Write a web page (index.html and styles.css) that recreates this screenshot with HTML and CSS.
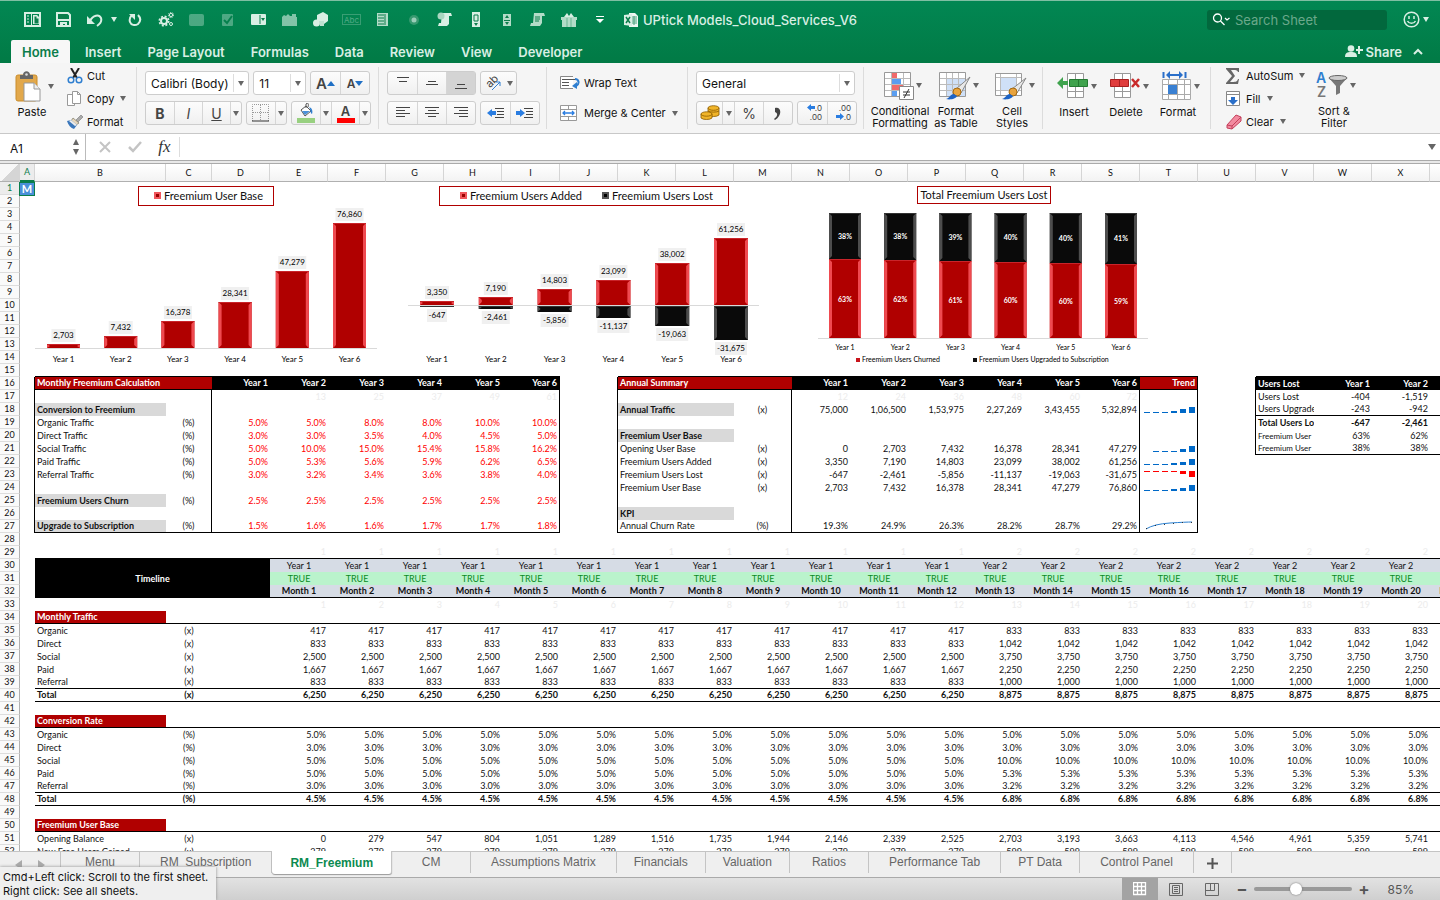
FILE: index.html
```
<!DOCTYPE html>
<html lang="en">

<head>
    <meta charset="UTF-8">
    <meta name="viewport" content="width=device-width, initial-scale=1.0">
    <title>UPtick Models_Cloud_Services_V6</title>
    <link rel="stylesheet" href="styles.css">
</head>

<body>
    <header class="top">
        <div class="titlebar">
            <nav class="quick">
                <button aria-label="Sidebar"><svg width="17" height="15" viewBox="0 0 17 15"><path d="M1 1h15v13H1z" fill="none" stroke="#d9efe4" stroke-width="2"/><path d="M3 4h2M3 7h2M3 10h2" stroke="#d9efe4"/><path d="M7 2h1v11H7zM9 3h4l2 2v7H9z" fill="#d9efe4"/><path d="M10.500 4.500h2v2h2v5h-4z" fill="#0b7d4b"/></svg></button>
                <button aria-label="Save"><svg width="15" height="15" viewBox="0 0 15 15"><path d="M1 1h11l2 2v11H1z" fill="none" stroke="#d9efe4" stroke-width="2"/><path d="M3 2h8v5H3z" fill="#0b7d4b"/><path d="M2 7h11v2H2zM4 10h7v4H9v-2H7v2H4z" fill="#d9efe4"/></svg></button>
                <button aria-label="Undo"><svg width="17" height="14" viewBox="0 0 17 14"><path d="M1 3v8h8z" fill="#d9efe4"/><path d="M4 8c3-6 9-7 11-3 1 3-1 6-4 8" fill="none" stroke="#d9efe4" stroke-width="2"/></svg></button>
                <i class="arrow light"></i>
                <button aria-label="Redo"><svg width="15" height="15" viewBox="0 0 15 15"><path d="M11 3c3 3 3 6 0 9-3 2-7 1-8-2-1-3 0-5 2-7" fill="none" stroke="#d9efe4" stroke-width="2"/><path d="M2 2h6v6z" fill="#d9efe4"/></svg></button>
                <button aria-label="Macros"><svg width="16" height="15" viewBox="0 0 16 15" fill="none" stroke="#d9efe4"><circle cx="6" cy="9" r="3" stroke-width="2"/><circle cx="6" cy="9" r="4.700" stroke-width="1.600" stroke-dasharray="2 1.700"/><circle cx="13" cy="3" r="1.600"/><circle cx="13" cy="3" r="2.600" stroke-dasharray="1.200 1"/><circle cx="13" cy="12" r="1.500"/></svg></button>
                <button class="dim" aria-label="Button control"><svg width="15" height="12" viewBox="0 0 15 12"><rect width="15" height="12" rx="2" fill="#d9efe4"/></svg></button>
                <button class="dim" aria-label="Check box"><svg width="12" height="12" viewBox="0 0 12 12"><rect width="11" height="12" rx="1" fill="#d9efe4"/><path d="M2 6l3 3 5-7" fill="none" stroke="#0b7d4b" stroke-width="2"/></svg></button>
                <button aria-label="Combo box"><svg width="15" height="11" viewBox="0 0 15 11"><rect width="15" height="11" rx="1" fill="#d9efe4"/><path d="M9 1v9" stroke="#0b7d4b"/><path d="M10 4h4l-2 3z" fill="#0b7d4b"/></svg></button>
                <button class="half" aria-label="Group box"><svg width="15" height="12" viewBox="0 0 15 12"><path d="M0 3l2-2 2 1 2-2 2 2h2V0h4v3h1v9H0z" fill="#d9efe4"/></svg></button>
                <button aria-label="Shapes"><svg width="15" height="15" viewBox="0 0 15 15"><path d="M4 3l6-3 5 3v6l-4 3-7-3z" fill="#d9efe4"/><circle cx="3.500" cy="11" r="3.500" fill="#d9efe4"/><path d="M6 9h5v5H7z" fill="#bfe2d1"/></svg></button>
                <button class="dim abc" aria-label="Label">Abc</button>
                <button aria-label="List box"><svg width="11" height="13" viewBox="0 0 11 13"><path d="M0 0h11v13H0z" fill="#b3dcc8"/><path d="M1 2h6M1 5h6M1 8h6M1 11h6M8 1v11" stroke="#0b7d4b"/></svg></button>
                <button class="half" aria-label="Option button"><svg width="12" height="12" viewBox="0 0 12 12"><circle cx="6" cy="6" r="5" fill="#5aa885"/><circle cx="6" cy="6" r="2.500" fill="#fff"/></svg></button>
                <button aria-label="Record macro"><svg width="15" height="15" viewBox="0 0 15 15"><path d="M5 1h9l1 3h-3v8l-2 2H1l1-3h2z" fill="#d9efe4"/><circle cx="4" cy="4" r="3.500" fill="#a9d6c0"/></svg></button>
                <button aria-label="Scroll bar"><svg width="8" height="15" viewBox="0 0 8 15"><path d="M0 0h8v15H0z" fill="#d9efe4"/><path d="M2 3h4v6H2z" fill="none" stroke="#0b7d4b"/><path d="M2 11h4l-2 3z" fill="#0b7d4b"/></svg></button>
                <button aria-label="Spin button"><svg width="8" height="12" viewBox="0 0 8 12"><path d="M0 0h8v12H0z" fill="#b3dcc8"/><path d="M2 4l2-3 2 3zM2 8l2 3 2-3zM1 6h6v1H1z" fill="#0b7d4b"/></svg></button>
                <button aria-label="Relative references"><svg width="15" height="13" viewBox="0 0 15 13"><path d="M4 0h10l1 3h-3v7l-2 3H0l1-3h2z" fill="#b3dcc8"/><path d="M5 4h5M5 6h5M5 8h4" stroke="#0b7d4b"/></svg></button>
                <button aria-label="Add-ins"><svg width="16" height="14" viewBox="0 0 16 14"><path d="M0 4h16v3h-1v7H1V7H0z" fill="#b3dcc8"/><path d="M3 4l3-4 2 3 2-3 3 4z" fill="#d9efe4"/><path d="M6 5v9M10 5v9" stroke="#6bb592"/></svg></button>
                <button aria-label="Customize toolbar"><svg width="8" height="8" viewBox="0 0 8 8"><path d="M0 0h8v1H0zM0 3h8L4 7z" fill="#fff"/></svg></button>
            </nav>
            <div class="doc">
                <svg width="14" height="14" viewBox="0 0 14 14"><path d="M5 0h6l3 3v11H5z" fill="#eef7f2"/><path d="M8 4h5M8 6h5M8 8h5M8 10h5M10 3v9" stroke="#4da27e"/><path d="M0 2l8-1v12l-8-1z" fill="#d9efe4"/><path d="M2 4l4 6M6 4l-4 6" stroke="#0b7d4b" stroke-width="1.500"/></svg>
                <span>UPtick Models_Cloud_Services_V6</span>
            </div>
            <label class="search">
                <svg width="19" height="13" viewBox="0 0 19 13" fill="none" stroke="#fff" stroke-width="1.300"><circle cx="5.500" cy="5" r="4"/><path d="M8.500 8l4 4M13 5l2 2 2.500-2"/></svg>
                <input type="text" placeholder="Search Sheet" aria-label="Search Sheet">
            </label>
            <button class="smile" aria-label="Feedback"><svg width="17" height="17" viewBox="0 0 17 17" fill="none" stroke="#d9efe4" stroke-width="1.500"><circle cx="8.500" cy="8.500" r="7.300"/><path d="M6 5v3M11 5v3M4.500 10c1.500 3 6.500 3 8 0"/></svg><i class="arrow light"></i></button>
        </div>
        <nav class="menu">
            <button class="current">Home</button>
            <button>Insert</button>
            <button>Page Layout</button>
            <button>Formulas</button>
            <button>Data</button>
            <button>Review</button>
            <button>View</button>
            <button>Developer</button>
            <button class="share"><svg width="18" height="13" viewBox="0 0 18 13" fill="#d9efe4"><circle cx="6" cy="3.500" r="3.300"/><path d="M0 12c0-4 2-5 6-5s6 1 6 5zM13 1h2v3h3v2h-3v3h-2V6h-2V4h2z"/></svg>Share</button>
            <button class="fold" aria-label="Collapse ribbon"><svg width="10" height="7" viewBox="0 0 10 7"><path d="M1 6l4-4 4 4" fill="none" stroke="#d9efe4" stroke-width="2"/></svg></button>
        </nav>
    </header>

    <section class="ribbon">
        <div class="group clipboard">
            <button class="big">
                <span class="pic"><svg width="26" height="31" viewBox="0 0 26 31"><rect x="1" y="4" width="21" height="26" rx="2" fill="#e2a84b" stroke="#c98c2c"/><path d="M5 8V4h3c0-5 7-5 7 0h3v4z" fill="#666"/><circle cx="11.500" cy="3.500" r="1.300" fill="#ddd"/><path d="M9 12h10l6 6v12H9z" fill="#fff" stroke="#999"/><path d="M19 12v6h6" fill="#eee" stroke="#999"/></svg><i class="arrow"></i></span>
                Paste
            </button>
            <div class="stack">
                <button><span class="ic"><svg width="16" height="16" viewBox="0 0 16 16"><path d="M4 0l6 10M12 0L6 10" stroke="#222" stroke-width="2"/><g fill="none" stroke="#2f7fd0" stroke-width="1.500"><circle cx="4" cy="12" r="2.800"/><circle cx="12" cy="12" r="2.800"/></g></svg></span>Cut</button>
                <button><span class="ic"><svg width="15" height="16" viewBox="0 0 15 16" fill="#fff" stroke="#999"><path d="M.5 3.500h7v11h-7z"/><path d="M5.500.5h5l3 3v9h-8z"/><path d="M10.500.5v3h3" fill="none"/></svg></span>Copy<i class="arrow"></i></button>
                <button><span class="ic"><svg width="16" height="14" viewBox="0 0 16 14"><path d="M9 5l5-5 2 2-5 5z" fill="#aaa" stroke="#777" stroke-width=".6"/><path d="M6 3l6 5-3 2-5-4z" fill="#e8d7bb" stroke="#776" stroke-width=".7"/><path d="M0 6l4-1 6 5-3 4c-3-1-6-4-7-8z" fill="#3b77bb"/><path d="M4 5l6 5-2 1-6-5z" fill="#eee"/></svg></span>Format</button>
            </div>
        </div>

        <div class="group rows font">
            <div class="line">
                <label class="pick name"><select aria-label="Font"><option>Calibri (Body)</option></select><i class="arrow"></i></label>
                <label class="pick size"><select aria-label="Font size"><option>11</option></select><i class="arrow"></i></label>
                <div class="set"><button class="wide" aria-label="Increase font size"><b class="a1">A</b><svg width="8" height="5" viewBox="0 0 8 5"><path d="M0 5l4-5 4 5z" fill="#1f6fc4"/></svg></button><button class="wide" aria-label="Decrease font size"><b class="a2">A</b><svg width="8" height="5" viewBox="0 0 8 5"><path d="M0 0l4 5 4-5z" fill="#1f6fc4"/></svg></button></div>
            </div>
            <div class="line">
                <div class="set"><button><b>B</b></button><button><em>I</em></button><button><u>U</u></button><button class="drop" aria-label="Underline options"><i class="arrow"></i></button></div>
                <div class="set"><button aria-label="Borders"><svg width="18" height="18" viewBox="0 0 18 18" fill="none"><path d="M.5 17V.5h16V17M8.500 1v16M1 8.500h16" stroke="#999" stroke-dasharray="1 1"/><path d="M0 17h17" stroke="#333"/></svg></button><button class="drop" aria-label="Border options"><i class="arrow"></i></button></div>
                <div class="set"><button aria-label="Fill color"><svg width="18" height="20" viewBox="0 0 18 20"><path d="M0 15h18v5H0z" fill="#98d080"/><path d="M4 7l5-4 5 5-6 5z" fill="#fff" stroke="#555"/><path d="M5 8l8 0-5 4z" fill="#4a90d9"/><path d="M9 5V1c2-2 3 0 2 3" fill="none" stroke="#555"/><path d="M12 4c3 1 4 4 3 7-2-1-1-4-3-7z" fill="#2f7fd0"/></svg></button><button class="drop" aria-label="Fill options"><i class="arrow"></i></button><button class="ink">A</button><button class="drop" aria-label="Font color options"><i class="arrow"></i></button></div>
            </div>
        </div>

        <div class="group rows align">
            <div class="line">
                <div class="set"><button aria-label="Top align"><svg width="14" height="16" viewBox="0 0 14 16"><path d="M1 2.500h12M3 6.500h8" stroke="#444"/></svg></button><button aria-label="Middle align"><svg width="14" height="16" viewBox="0 0 14 16"><path d="M3 6.500h8M1 9.500h12" stroke="#444"/></svg></button><button class="on" aria-label="Bottom align"><svg width="14" height="16" viewBox="0 0 14 16"><path d="M3 9.500h8M1 13.500h12" stroke="#444"/></svg></button></div>
                <div class="set"><button class="rot" aria-label="Orientation"><svg width="18" height="18" viewBox="0 0 18 18"><text x="2" y="13" transform="rotate(-45 5 10)" class="ab">ab</text><path d="M7 16L15 8M15 8h-4M15 8v4" stroke="#2f7fd0" fill="none"/></svg><i class="arrow"></i></button></div>
            </div>
            <div class="line">
                <div class="set"><button aria-label="Align left"><svg width="16" height="14" viewBox="0 0 16 14"><path d="M1 1.500h14M1 4.500h9M1 7.500h14M1 10.500h9" stroke="#444"/></svg></button><button aria-label="Align center"><svg width="16" height="14" viewBox="0 0 16 14"><path d="M1 1.500h14M4 4.500h8M1 7.500h14M4 10.500h8" stroke="#444"/></svg></button><button aria-label="Align right"><svg width="16" height="14" viewBox="0 0 16 14"><path d="M1 1.500h14M6 4.500h9M1 7.500h14M6 10.500h9" stroke="#444"/></svg></button></div>
                <div class="set"><button aria-label="Decrease indent"><svg width="18" height="12" viewBox="0 0 18 12"><path d="M8 1.500h9M10 4.500h7M10 7.500h7M8 10.500h9" stroke="#444"/><path d="M0 6l5-4v2h4v4H5v2z" fill="#2a7de1"/></svg></button><button aria-label="Increase indent"><svg width="18" height="12" viewBox="0 0 18 12"><path d="M8 1.500h9M10 4.500h7M10 7.500h7M8 10.500h9" stroke="#444"/><path d="M9 6L4 2v2H0v4h4v2z" fill="#2a7de1"/></svg></button></div>
            </div>
        </div>

        <div class="group rows wrap">
            <button class="plain"><span class="ic"><svg width="20" height="14" viewBox="0 0 20 14"><path d="M13 12.500H.5V.5H13" fill="#fff" stroke="#888"/><path d="M2 3.500h13M2 6.500h7M2 9.500h7" stroke="#555"/><path d="M15 3c4 0 5 5 1 7" fill="none" stroke="#2f7fd0" stroke-width="2"/><path d="M17 6v7l-5-3z" fill="#2f7fd0"/></svg></span>Wrap Text</button>
            <button class="plain"><span class="ic"><svg width="18" height="17" viewBox="0 0 18 17"><path d="M.5.5h16v15H.5z" fill="#fff" stroke="#999"/><path d="M.5 4.500h16M.5 11.500h16M8.500 1v3M8.500 12v3" stroke="#999"/><path d="M3 8h11M5 6L3 8l2 2M12 6l2 2-2 2" fill="none" stroke="#2a7de1" stroke-width="1.300"/></svg></span>Merge &amp; Center<i class="arrow"></i></button>
        </div>

        <div class="group rows number">
            <label class="pick format"><select aria-label="Number format"><option>General</option></select><i class="arrow"></i></label>
            <div class="line">
                <div class="set"><button class="coin" aria-label="Currency"><svg width="20" height="16" viewBox="0 0 20 16" fill="#f0b429" stroke="#8a5a00" stroke-width=".8"><path d="M8 3v7c2 2 9 2 11 0V3z"/><ellipse cx="13.500" cy="3" rx="5.500" ry="2.300"/><path d="M8 6c2 1.500 9 1.500 11 0M1 9v4c2 2 9 2 11 0V9z"/><ellipse cx="6.500" cy="9" rx="5.500" ry="2.200"/></svg></button><button class="drop" aria-label="Currency options"><i class="arrow"></i></button><button class="pct">%</button><button aria-label="Comma style"><svg width="8" height="13" viewBox="0 0 8 13"><path d="M1 1c6-2 8 7 0 12l-1-1c4-3 4-6 1-7z" fill="#444"/></svg></button></div>
                <div class="set dec"><button aria-label="Increase decimal"><span><svg width="8" height="7" viewBox="0 0 8 7"><path d="M0 3.500L4 0v2h4v3H4v2z" fill="#2a7de1"/></svg>.0</span><span>.00</span></button><button aria-label="Decrease decimal"><span>.00</span><span><svg width="8" height="7" viewBox="0 0 8 7"><path d="M8 3.500L4 0v2H0v3h4v2z" fill="#2a7de1"/></svg>.0</span></button></div>
            </div>
        </div>

        <div class="group styles">
            <button class="big"><span class="pic"><svg width="30" height="28" viewBox="0 0 30 28"><path d="M.5.5h26v24H.5z" fill="#fff" stroke="#999"/><path d="M7 1h6v5H7zM7 12h12v6H7z" fill="#f06a6a"/><path d="M7 6h10v6H7zM7 18h6v6H7z" fill="#5a9df0"/><path d="M1 6.500h25M1 12.500h25M1 18.500h25M7.500 1v23M19.500 1v23" stroke="#bbb"/><path d="M15.500 14.500h14v13h-14z" fill="#fff" stroke="#888"/><path d="M19 20h7M19 23h7M25 17l-5 9" stroke="#333"/></svg><i class="arrow"></i></span>Conditional<br>Formatting</button>
            <button class="big"><span class="pic"><svg width="32" height="28" viewBox="0 0 32 28"><path d="M.5.5h26v24H.5z" fill="#fff" stroke="#999"/><path d="M7 7h19v17H7z" fill="#cfe0f7"/><path d="M1 6.500h25M1 12.500h25M1 18.500h25M7.500 1v23M13.500 1v23M19.500 1v23" stroke="#bbb"/><path d="M17 17L31 5l-9 16z" fill="#e8e8e8" stroke="#888"/><circle cx="18" cy="20" r="4" fill="#e8a33d" stroke="#a66a10"/><path d="M7 27c4-1 4-5 8-5l3 2c-1 3-7 4-11 3z" fill="#1d63c4"/></svg><i class="arrow"></i></span>Format<br>as Table</button>
            <button class="big"><span class="pic"><svg width="32" height="28" viewBox="0 0 32 28"><path d="M.5 1.500h26v22H.5z" fill="#fff" stroke="#999"/><path d="M1 5.500h25M1 18.500h25M5.500 2v21M21.500 2v21" stroke="#bbb"/><path d="M6 6h15v12H6z" fill="#cfe0f7"/><path d="M17 17L31 6l-9 15z" fill="#e8e8e8" stroke="#888"/><circle cx="18" cy="20" r="4" fill="#e8a33d" stroke="#a66a10"/><path d="M7 27c4-1 4-5 8-5l3 2c-1 3-7 4-11 3z" fill="#1d63c4"/></svg><i class="arrow"></i></span>Cell<br>Styles</button>
        </div>

        <div class="group cells">
            <button class="big"><span class="pic"><svg width="32" height="28" viewBox="0 0 32 28"><path d="M10.500 1.500h16v24h-16zM18.500 2v24M11 19.500h15" fill="#fff" stroke="#999"/><path d="M12.500 7.500h18v7h-18z" fill="#3fa34d" stroke="#257a33"/><path d="M21.500 8v7" stroke="#257a33"/><path d="M0 11l6-6v4h5v4H6v4z" fill="#3fa34d"/></svg><i class="arrow"></i></span>Insert</button>
            <button class="big"><span class="pic"><svg width="32" height="28" viewBox="0 0 32 28"><path d="M5.500 1.500h16v24h-16zM13.500 2v24M6 19.500h15" fill="#fff" stroke="#999"/><path d="M1.500 7.500h18v7h-18z" fill="#e03c3c" stroke="#a82020"/><path d="M10.500 8v7" stroke="#a82020"/><path d="M23 7l7 8M30 7l-7 8" stroke="#c92a2a" stroke-width="2.500"/></svg><i class="arrow"></i></span>Delete</button>
            <button class="big"><span class="pic"><svg width="30" height="30" viewBox="0 0 30 30"><path d="M.5 8.500h28v20H.5zM6.500 9v19M15.500 9v19M22.500 9v19M1 13.500h27M1 23.500h27" fill="#fff" stroke="#aaa"/><path d="M6 14h9v9H6z" fill="#3a80d2"/><path d="M1.500 1v6M23.500 1v6M5 4h15" stroke="#2a6fc9" stroke-width="2"/><path d="M8 0v8L4 4zM17 0v8l4-4z" fill="#2a6fc9"/></svg><i class="arrow"></i></span>Format</button>
        </div>

        <div class="group edit">
            <div class="stack">
                <button><span class="ic"><svg width="14" height="16" viewBox="0 0 14 16"><path d="M0 0h13v4h-1c-1-2-2-2-7-2l4 6-5 6c6 0 7 0 8-3h1l-1 5H0v-1l6-7-6-7z" fill="#666"/></svg></span>AutoSum<i class="arrow"></i></button>
                <button><span class="ic"><svg width="14" height="15" viewBox="0 0 14 15"><path d="M.5.5h13v14H.5zM.5 3.500h13" fill="#fff" stroke="#888"/><path d="M5 6h4v3h3l-5 5-5-5h3z" fill="#2a6fc9"/></svg></span>Fill<i class="arrow"></i></button>
                <button><span class="ic"><svg width="16" height="16" viewBox="0 0 16 16"><path d="M1 11L10 1l5 2v4l-9 8-5-1z" fill="#f28ba0" stroke="#c4405c"/><path d="M1 11l5 1 9-9M6 12v3" fill="none" stroke="#c4405c"/></svg></span>Clear<i class="arrow"></i></button>
            </div>
            <button class="big"><span class="pic"><svg width="32" height="27" viewBox="0 0 32 27"><g class="az"><text x="0" y="11" fill="#2f7fd0">A</text><text x="1" y="25" fill="#777">Z</text></g><path d="M13 6l7 8v9l4-2v-7l7-8z" fill="#777"/><ellipse cx="22" cy="6" rx="9" ry="2.500" fill="#ccc" stroke="#666"/></svg><i class="arrow"></i></span>Sort &amp;<br>Filter</button>
        </div>
    </section>

    <section class="formula">
        <input class="ref" type="text" value="A1" aria-label="Name box">
        <span class="step"><i class="up"></i><i class="down"></i></span>
        <button aria-label="Cancel"><svg width="12" height="12" viewBox="0 0 12 12"><path d="M1 1l10 10M11 1L1 11" stroke="#c4c4c4" stroke-width="2"/></svg></button>
        <button aria-label="Enter"><svg width="14" height="12" viewBox="0 0 14 12"><path d="M1 6l4 4 8-9" fill="none" stroke="#c4c4c4" stroke-width="2.500"/></svg></button>
        <button class="fx">fx</button>
        <input class="entry" type="text" aria-label="Formula">
        <i class="arrow large"></i>
    </section>

    <main class="sheet">
        <table id="grid"></table>
        <span class="mark">M</span>
        <figure class="chart c1"><figcaption class="key"><i class="sq"></i>Freemium User Base</figcaption><svg id="base" width="352" height="190"></svg></figure>
        <figure class="chart c2"><figcaption class="key"><i class="sq"></i>Freemium Users Added<i class="sq dark"></i>Freemium Users Lost</figcaption><svg id="moves" width="360" height="190"></svg></figure>
        <figure class="chart c3"><figcaption class="key">Total Freemium Users Lost</figcaption><svg id="lost" width="340" height="190"></svg></figure>
    </main>

    <nav class="tabs">
        <span class="scroll"><i></i><i class="next"></i></span>
        <button>Menu</button>
        <button>RM_Subscription</button>
        <button class="current">RM_Freemium</button>
        <button>CM</button>
        <button>Assumptions Matrix</button>
        <button class="slim">Financials</button>
        <button class="slim">Valuation</button>
        <button class="slim">Ratios</button>
        <button>Performance Tab</button>
        <button class="slim">PT Data</button>
        <button>Control Panel</button>
        <button class="add" aria-label="Add sheet"><svg width="11" height="11" viewBox="0 0 11 11"><path d="M5.500 0v11M0 5.500h11" stroke="#555" stroke-width="2"/></svg></button>
    </nav>
    <footer class="status">
        <button class="on" aria-label="Normal view"><svg width="14" height="14" viewBox="0 0 14 14"><path d="M.5.5h12v12H.5zM4.500 0v13M8.500 0v13M0 4.500h13M0 8.500h13" fill="none" stroke="#fff" stroke-width="1.300"/></svg></button>
        <button aria-label="Page layout view"><svg width="14" height="13" viewBox="0 0 14 13"><path d="M.5.5h13v12H.5zM3.500 2.500h7v8h-7zM5 4.500h4M5 6.500h4M5 8.500h4" fill="none" stroke="#666"/></svg></button>
        <button aria-label="Page break view"><svg width="14" height="13" viewBox="0 0 14 13"><path d="M.5.5h13v12H.5zM.5 7.500h9v-7M5.500.5v7" fill="none" stroke="#666"/></svg></button>
        <span class="sign">&#8722;</span>
        <input type="range" min="10" max="190" value="85" aria-label="Zoom">
        <span class="sign">+</span>
        <span class="zoom">85%</span>
    </footer>
    <div class="tip">Cmd+Left click: Scroll to the first sheet.<br>Right click: See all sheets.</div>
    <script src="script.js"></script>
</body>

</html>
```
FILE: styles.css
```
* {
    box-sizing: border-box;
}

body {
    margin: 0;
    height: 100vh;
    display: flex;
    flex-direction: column;
    overflow: hidden;
    position: relative;
    font-family: Inter, sans-serif;
    font-size: 11px;
    color: #111;
    background: #fff;
}

button, input, select {
    font: inherit;
    color: inherit;
    border: 0;
    padding: 0;
    margin: 0;
    background: none;
    white-space: nowrap;
}

svg {
    display: block;
    flex: none;
}

.arrow {
    flex: none;
    border: 3px solid transparent;
    border-top: 5px solid #666;
    border-bottom: 0;
}

.arrow.light {
    border-top-color: #d9efe4;
}

.arrow.large {
    border-width: 6px 4px 0;
}

/* title bar and menu */
.top {
    height: 63px;
    flex: none;
    border-top: 1px solid #7fbfa3;
    background: linear-gradient(#028753, #017a45);
    color: #d9efe4;
    font-size: 13px;
}

.titlebar {
    height: 37px;
    display: flex;
    align-items: center;
}

.quick {
    display: flex;
    align-items: center;
    padding-left: 17px;
}

.quick button {
    width: 31px;
    height: 20px;
    display: flex;
    align-items: center;
    justify-content: center;
}

.quick .arrow {
    margin: 0 2px 0 1px;
}

.dim {
    opacity: .35;
}

.half {
    opacity: .6;
}

.quick .abc {
    width: 19px;
    height: 11px;
    margin: 0 6px;
    border: 1px solid #9fceb8;
    font-size: 8px;
}

.doc {
    display: flex;
    align-items: center;
    gap: 5px;
    margin-left: 9px;
    font-weight: 500;
}

.search {
    margin-left: auto;
    width: 180px;
    height: 20px;
    display: flex;
    align-items: center;
    gap: 4px;
    padding-left: 5px;
    border-radius: 3px;
    background: #02683d;
}

.search input {
    width: 140px;
}

.search input::placeholder {
    color: #6ba88b;
    opacity: 1;
}

.smile {
    display: flex;
    align-items: center;
    gap: 3px;
    margin: 0 11px 0 16px;
}

.menu {
    display: flex;
    align-items: center;
    height: 25px;
    margin-left: 11px;
    font-weight: 600;
}

.menu button {
    height: 23px;
    padding: 0 13px;
    align-self: end;
}

.menu .current {
    padding: 0 11px;
    margin-right: 2px;
    background: #f7f7f7;
    color: #0b7d4b;
    border-radius: 2px 2px 0 0;
}

.menu .share {
    margin-left: auto;
    padding: 0;
    display: flex;
    gap: 3px;
    align-items: center;
}

.menu .fold {
    padding: 0 17px 0 11px;
}

/* ribbon */
.ribbon {
    flex: none;
    display: flex;
    height: 71px;
    padding: 4px 0;
    background: #f5f5f5;
    border-bottom: 1px solid #c8c8c8;
}

.group {
    flex: none;
    display: flex;
    border-right: 1px solid #dcdcdc;
}

.rows {
    flex-direction: column;
    gap: 6px;
    padding: 4px 8px 0;
}

.line {
    display: flex;
    gap: 4px;
}

.big {
    display: flex;
    flex-direction: column;
    align-items: center;
    line-height: 12px;
}

.pic {
    display: flex;
    align-items: center;
    justify-content: center;
    gap: 2px;
    height: 32px;
    margin: 3px 0 4px;
    padding-left: 5px;
}

.stack {
    display: flex;
    flex-direction: column;
    margin-top: -3px;
}

.stack button, .plain {
    flex: none;
    display: flex;
    align-items: center;
    height: 23px;
}

.stack .arrow {
    margin-left: 6px;
}

.ic {
    width: 20px;
}

.clipboard {
    width: 137px;
    padding-left: 10px;
    gap: 13px;
}

.clipboard .pic {
    gap: 7px;
}

.font {
    width: 242px;
}

.align {
    width: 168px;
}

.wrap {
    width: 141px;
    padding-left: 13px;
}

.wrap .plain {
    height: 24px;
}

.wrap .ic {
    width: 24px;
}

.wrap .arrow {
    margin-left: 6px;
}

.number {
    width: 176px;
}

.styles {
    width: 179px;
    padding-left: 8px;
}

.styles .big {
    width: 56px;
}

.cells {
    width: 168px;
    padding-left: 5px;
}

.cells .big {
    width: 52px;
}

.edit {
    padding-left: 15px;
    gap: 6px;
    border: 0;
}

.set, .pick {
    display: flex;
    height: 24px;
    border: 1px solid #cdcdcd;
    border-radius: 3px;
    background: linear-gradient(#fcfcfc, #f0f0f0);
}

.set button {
    width: 29px;
    display: flex;
    align-items: center;
    justify-content: center;
    border-left: 1px solid #d6d6d6;
    font-size: 14px;
    color: #444;
}

.set button:first-child {
    border-left: 0;
}

.font .line:last-child button {
    width: 28px;
}

.font .line .drop, .set .drop {
    width: 12px;
}

.font .line:last-child .drop {
    width: 11px;
}

.set .on {
    background: #d4d4d4;
}

.set .rot {
    width: 35px;
    gap: 4px;
}

.set .coin {
    width: 25px;
}

.font .line .ink {
    width: 26px;
    flex-direction: column;
    font-size: 13px;
    font-weight: 600;
    line-height: 14px;
}

.ink::after {
    content: "";
    width: 18px;
    height: 5px;
    background: #f00;
}

.a1 {
    font-size: 15px;
    font-weight: 600;
}

.a2 {
    font-size: 12px;
    font-weight: 600;
}

.ab {
    font-size: 11px;
    fill: #444;
}

.az {
    font-size: 14px;
    font-weight: 600;
}

.set.dec button {
    flex-direction: column;
    align-items: end;
    padding-right: 5px;
    font-size: 8px;
    line-height: 9px;
}

.dec span {
    display: flex;
}

.pick {
    align-items: center;
    background: #fff;
    padding-right: 4px;
}

.pick select {
    flex: 1;
    min-width: 0;
    appearance: none;
    height: 18px;
    padding-left: 5px;
    margin-right: 4px;
    border-right: 1px solid #ddd;
    font-size: 12px;
    outline: 0;
}

.name {
    width: 105px;
}

.size {
    width: 53px;
}

.format {
    width: 159px;
}

/* formula bar */
.formula {
    flex: none;
    height: 30px;
    display: flex;
    align-items: center;
    padding: 0 4px 3px 0;
    border-bottom: 1px solid #aaa;
    box-shadow: inset 0 -2px #e8e8e8, inset 0 -3px #aaa;
}

.formula .ref {
    width: 73px;
    padding: 2px 0 0 10px;
    font-size: 12px;
}

.step {
    width: 13px;
    height: 26px;
    display: flex;
    flex-direction: column;
    justify-content: center;
    gap: 4px;
    border-right: 1px solid #bbb;
}

.step i {
    width: 6px;
    border: 3px solid transparent;
}

.step .up {
    border-top: 0;
    border-bottom: 6px solid #666;
}

.step .down {
    border-bottom: 0;
    border-top: 6px solid #666;
}

.formula button {
    width: 30px;
    display: flex;
    justify-content: center;
}

.formula button:first-of-type {
    margin-left: 4px;
}

.formula .fx {
    font: italic 17px "Liberation Serif", serif;
    color: #333;
    border-right: 1px solid #ddd;
}

.formula .entry {
    flex: 1;
}

/* grid */
.sheet {
    flex: 1;
    min-height: 0;
    position: relative;
    overflow: hidden;
    font-family: Lato, sans-serif;
    font-size: 9px;
}

#grid {
    table-layout: fixed;
    width: 1488px;
    border-spacing: 0;
    line-height: 12px;
}

#grid th, #grid td {
    height: 13px;
    padding: 0 2px;
    white-space: nowrap;
    text-align: right;
    vertical-align: bottom;
}

#grid thead th {
    height: 18px;
    padding: 0;
    text-align: center;
    vertical-align: middle;
    font-weight: 400;
    background: linear-gradient(#fff, #f3f3f3);
    border-right: 1px solid #d5d5d5;
    border-bottom: 1px solid #b0b0b0;
}

#grid tbody th {
    padding: 0;
    text-align: center;
    font-weight: 400;
    background: #fafafa;
    border-right: 1px solid #b0b0b0;
    border-bottom: 1px solid #ddd;
}

#grid .picked {
    color: #0b7d4b;
    background: #ececec;
}

#grid thead .picked {
    border-bottom: 2px solid #0b7d4b;
}

#grid .corner {
    background: linear-gradient(135deg, #f7f7f7 50%, #d5d5d5 50%);
}

#grid .l { text-align: left; }
#grid .c { text-align: center; }
#grid .b { border-bottom: 1px solid #000; }
#grid .r { border-right: 1px solid #000; }
#grid .w { font-weight: 700; }
#grid .clip { overflow: hidden; }
#grid .small { font-size: 8px; }
#grid .red { background: #b00000; color: #fff; }
#grid .black { background: #000; color: #fff; }
#grid .gray { background: #d9d9d9; }
#grid .blue { background: #d6dce5; }
#grid .green { background: #baf3cc; color: #0a8a1f; }
#grid .input { color: #f00; }
#grid .faint { color: #ececec; }
#grid .mid { vertical-align: middle; }

.mark {
    position: absolute;
    left: 19px;
    top: 18px;
    width: 16px;
    height: 14px;
    border: 1px solid #0b7d4b;
    background: #4a90d9;
    color: #fff;
    font-size: 11px;
    font-weight: 700;
    line-height: 12px;
    text-align: center;
}

/* charts float over the cells */
.chart {
    position: absolute;
    top: 18px;
    margin: 0;
    display: grid;
    justify-items: center;
}

.c1 { left: 30px; }
.c2 { left: 404px; }
.c3 { left: 814px; }

.chart svg, .key {
    grid-area: 1 / 1;
    z-index: 0;
}

.key {
    z-index: 1;
    height: 20px;
    margin-top: 4px;
    padding: 0 10px 2px 15px;
    display: flex;
    align-items: center;
    border: 1px solid #b00000;
    font-size: 11px;
}

.c2 .key {
    padding: 0 15px 2px 20px;
}

.c3 .key {
    height: 18px;
    padding: 0 2px 2px;
}

.sq {
    width: 7px;
    height: 7px;
    margin-right: 3px;
    border: 2px solid #f0565c;
    background: #900;
}

.sq.dark {
    margin-left: 20px;
    border-color: #555;
    background: #000;
}

.axis {
    stroke: #d9d9d9;
}

.chart text {
    text-anchor: middle;
    font-size: 8px;
}

.chart .pct {
    fill: #fff;
    font-size: 7px;
    font-weight: 700;
}

.chart .small {
    font-size: 7px;
}

.chart .start {
    text-anchor: start;
}

/* sheet tabs */
.tabs {
    flex: none;
    display: flex;
    height: 27px;
    padding-bottom: 4px;
    background: #efefef;
    border-top: 1px solid #c4c4c4;
    border-bottom: 1px solid #aaa;
    font-family: "Liberation Sans", sans-serif;
    font-size: 12px;
    color: #666;
}

.tabs button {
    min-width: 79px;
    padding: 0 20px 2px;
    border-right: 1px solid #c4c4c4;
}

.tabs .slim {
    padding: 0 17px 2px;
}

.tabs .current {
    height: 23px;
    margin-top: -1px;
    padding: 0 18px;
    background: #fff;
    color: #0b8a50;
    font-weight: 700;
    border-radius: 0 0 3px 3px;
    box-shadow: 0 1px 1px #999;
}

.tabs .add {
    min-width: 38px;
    padding: 1px 13px 0;
}

.scroll {
    width: 61px;
    display: flex;
    gap: 16px;
    padding: 8px 0 0 15px;
    border-right: 1px solid #c4c4c4;
}

.scroll i {
    height: 10px;
    border: 5px solid transparent;
    border-left: 0;
    border-right: 7px solid #aaa;
}

.scroll .next {
    border-right: 0;
    border-left: 7px solid #aaa;
}

.status {
    flex: none;
    height: 22px;
    display: flex;
    align-items: center;
    justify-content: end;
    padding-right: 26px;
    background: linear-gradient(#e2e2e2, #cfcfcf);
    font-size: 12px;
    color: #555;
}

.status button {
    width: 36px;
    height: 22px;
    display: flex;
    align-items: center;
    justify-content: center;
}

.status .on {
    background: #a3a3a3;
}

.sign {
    width: 24px;
    text-align: center;
    font-size: 17px;
    font-weight: 600;
}

.status input {
    appearance: none;
    width: 98px;
    height: 4px;
    border-radius: 2px;
    background: #999;
}

.status input::-webkit-slider-thumb {
    appearance: none;
    width: 12px;
    height: 12px;
    border-radius: 50%;
    background: #fff;
    box-shadow: 0 0 2px #666;
}

.zoom {
    width: 38px;
    text-align: right;
}

.tip {
    position: absolute;
    left: 0;
    bottom: 0;
    padding: 3px 8px 2px 3px;
    background: #efefef;
    box-shadow: 0 0 3px #888;
    line-height: 14px;
}
```
FILE: script.js
```
var letters = 'ABCDEFGHIJKLMNOPQRSTUVWXY'.split('');
var lastRow = 52;
var cells = {};

function put(col, row, text, cls, span, rows) {
    cells[letters[col] + row] = { text: text, cls: cls || '', span: span || 1, rows: rows || 1 };
}

// add a class to every cell of a range
function mark(c1, c2, r1, r2, cls) {
    for (var r = r1; r <= r2; r++) {
        for (var c = c1; c <= c2; c++) {
            var key = letters[c] + r;
            if (!cells[key]) put(c, r, '');
            cells[key].cls += ' ' + cls;
        }
    }
}

function series(col, row, list, cls) {
    for (var i = 0; i < list.length; i++) put(col + i, row, list[i], cls);
}

function repeat(a, b) {
    var out = [];
    for (var i = 0; i < 21; i++) out.push(i < 12 ? a : b);
    return out;
}

// trend columns, one per year
function trend(list, color) {
    var down = list[5] < 0, s = '';
    for (var i = 0; i < 6; i++) {
        if (!list[i]) continue;
        var h = Math.max(1, Math.round(Math.abs(list[i] / list[5]) * 7 - 1));
        s += '<rect x="' + (2 + i * 9) + '" y="' + (down ? 2 : 9 - h) + '" width="6" height="' + h + '" fill="' + color + '"/>';
    }
    return '<svg width="54" height="12">' + s + '</svg>';
}

var years = ['Year 1', 'Year 2', 'Year 3', 'Year 4', 'Year 5', 'Year 6'];

// monthly calculation
put(1, 16, 'Monthly Freemium Calculation', 'l w red', 2);
series(3, 16, years, 'w black');
series(4, 17, [13, 25, 37, 49, 61], 'faint');
put(1, 18, 'Conversion to Freemium', 'l w gray');
var rates = {
    19: ['Organic Traffic', 'l', '5.0% 5.0% 8.0% 8.0% 10.0% 10.0%'],
    20: ['Direct Traffic', 'l', '3.0% 3.0% 3.5% 4.0% 4.5% 5.0%'],
    21: ['Social Traffic', 'l', '5.0% 10.0% 15.0% 15.4% 15.8% 16.2%'],
    22: ['Paid Traffic', 'l', '5.0% 5.3% 5.6% 5.9% 6.2% 6.5%'],
    23: ['Referral Traffic', 'l', '3.0% 3.2% 3.4% 3.6% 3.8% 4.0%'],
    25: ['Freemium Users Churn', 'l w gray', '2.5% 2.5% 2.5% 2.5% 2.5% 2.5%'],
    27: ['Upgrade to Subscription', 'l w gray', '1.5% 1.6% 1.6% 1.7% 1.7% 1.8%']
};
for (var r in rates) {
    put(1, r, rates[r][0], rates[r][1]);
    put(2, r, '(%)', 'c');
    series(3, r, rates[r][2].split(' '), 'input');
}
mark(0, 0, 16, 27, 'r');
mark(2, 2, 17, 27, 'r');
mark(8, 8, 16, 27, 'r');
mark(1, 8, 16, 16, 'b');
mark(1, 8, 27, 27, 'b');
mark(1, 8, 15, 15, 'b');

// annual summary
put(10, 16, 'Annual Summary', 'l w red', 3);
series(13, 16, years, 'w black');
put(19, 16, 'Trend', 'w red');
series(13, 17, [12, 24, 36, 48, 60, 72], 'faint');
var summary = {
    18: ['Annual Traffic', 'l w gray', '75,000 1,06,500 1,53,975 2,27,269 3,43,455 5,32,894'],
    20: ['Freemium User Base', 'l w gray'],
    21: ['Opening User Base', 'l', '0 2,703 7,432 16,378 28,341 47,279'],
    22: ['Freemium Users Added', 'l', '3,350 7,190 14,803 23,099 38,002 61,256'],
    23: ['Freemium Users Lost', 'l', '-647 -2,461 -5,856 -11,137 -19,063 -31,675'],
    24: ['Freemium User Base', 'l', '2,703 7,432 16,378 28,341 47,279 76,860'],
    26: ['KPI', 'l w gray'],
    27: ['Annual Churn Rate', 'l', '19.3% 24.9% 26.3% 28.2% 28.7% 29.2%']
};
for (r in summary) {
    put(10, r, summary[r][0], summary[r][1], 2);
    if (!summary[r][2]) continue;
    put(12, r, r == 27 ? '(%)' : '(x)', 'c');
    var list = summary[r][2].split(' ');
    series(13, r, list);
    if (r != 27) {
        var nums = list.map(function (n) { return parseFloat(n.replace(/,/g, '')); });
        put(19, r, trend(nums, r == 23 ? '#f00' : '#0069c8'));
    }
}
put(19, 27, '<svg width="54" height="12"><path d="M4 9Q12 4 28 3T50 2" fill="none" stroke="#2a7fd0"/><path d="M4 8h1v1H4zM13 5h1v1h-1zM22 4h1v1h-1zM31 3h1v1h-1zM40 2h1v1h-1zM49 2h1v1h-1z" fill="#333"/></svg>');
mark(9, 9, 16, 27, 'r');
mark(12, 12, 17, 27, 'r');
mark(18, 18, 16, 27, 'r');
mark(19, 19, 16, 27, 'r');
mark(10, 19, 16, 16, 'b');
mark(10, 19, 27, 27, 'b');
mark(10, 19, 15, 15, 'b');

// users lost
var lost = [
    ['Users Lost', 'Year 1', 'Year 2', 'Year 3'],
    ['Users Lost', '-404', '-1,519', '-3,573'],
    ['Users Upgraded', '-243', '-942', '-2,283'],
    ['Total Users Lost', '-647', '-2,461', '-5,856'],
    ['Freemium User', '63%', '62%', '61%'],
    ['Freemium User', '38%', '38%', '39%']
];
for (var i = 0; i < 6; i++) {
    series(21, 16 + i, lost[i], i == 0 ? 'w black' : i == 3 ? 'w' : '');
    cells['V' + (16 + i)].cls += i > 3 ? ' l small' : ' l clip';
}
mark(20, 20, 16, 21, 'r');
mark(21, 24, 15, 15, 'b');
mark(21, 24, 18, 18, 'b');
mark(21, 24, 21, 21, 'b');

// timeline
put(1, 30, 'Timeline', 'c w black mid', 3, 3);
for (i = 0; i < 21; i++) {
    var y = i < 12 ? 1 : 2;
    put(4 + i, 29, y, 'faint b');
    put(4 + i, 30, 'Year ' + y, 'c blue');
    put(4 + i, 31, 'TRUE', 'c green');
    put(4 + i, 32, 'Month ' + (i + 1), 'c w blue b');
    put(4 + i, 33, i + 1, 'faint');
}
mark(1, 3, 29, 29, 'b');

function block(row, title, unit, list) {
    put(1, row, title, 'l w red');
    mark(1, 24, row, row, 'b');
    for (var i = 0; i < list.length; i++) {
        var total = list[i][0] == 'Total' ? 'w ' : '';
        put(1, row + 1 + i, list[i][0], total + 'l');
        put(2, row + 1 + i, unit, total + 'c');
        series(4, row + 1 + i, list[i][1], total);
        if (total) mark(1, 24, row + i, row + 1 + i, 'b');
    }
}

block(34, 'Monthly Traffic', '(x)', [
    ['Organic', repeat('417', '833')],
    ['Direct', repeat('833', '1,042')],
    ['Social', repeat('2,500', '3,750')],
    ['Paid', repeat('1,667', '2,250')],
    ['Referral', repeat('833', '1,000')],
    ['Total', repeat('6,250', '8,875')]
]);
block(42, 'Conversion Rate', '(%)', [
    ['Organic', repeat('5.0%', '5.0%')],
    ['Direct', repeat('3.0%', '3.0%')],
    ['Social', repeat('5.0%', '10.0%')],
    ['Paid', repeat('5.0%', '5.3%')],
    ['Referral', repeat('3.0%', '3.2%')],
    ['Total', repeat('4.5%', '6.8%')]
]);
block(50, 'Freemium User Base', '(x)', [
    ['Opening Balance', '0 279 547 804 1,051 1,289 1,516 1,735 1,944 2,146 2,339 2,525 2,703 3,193 3,663 4,113 4,546 4,961 5,359 5,741 6,107'.split(' ')],
    ['New Free Users Gained', repeat('279', '599')]
]);

function drawGrid() {
    var html = '<colgroup><col style="width:20px">';
    letters.forEach(function (l, c) {
        html += '<col style="width:' + ([15, 131, 46][c] || 58) + 'px">';
    });
    html += '</colgroup><thead><tr><th class="corner"></th>';
    letters.forEach(function (l) {
        html += '<th' + (l == 'A' ? ' class="picked"' : '') + '>' + l + '</th>';
    });
    html += '</tr></thead><tbody>';
    var taken = {};
    for (var r = 1; r <= lastRow; r++) {
        html += '<tr><th' + (r == 1 ? ' class="picked"' : '') + '>' + r + '</th>';
        for (var c = 0; c < letters.length; c++) {
            var key = letters[c] + r;
            if (taken[key]) continue;
            var cell = cells[key] || { text: '', cls: '', span: 1, rows: 1 };
            for (var y = 0; y < cell.rows; y++)
                for (var x = 0; x < cell.span; x++) taken[letters[c + x] + (r + y)] = true;
            html += '<td' + (cell.cls ? ' class="' + cell.cls.trim() + '"' : '') +
                (cell.span > 1 ? ' colspan="' + cell.span + '"' : '') +
                (cell.rows > 1 ? ' rowspan="' + cell.rows + '"' : '') + '>' + cell.text + '</td>';
        }
        html += '</tr>';
    }
    document.getElementById('grid').innerHTML = html + '</tbody>';
}

// bevelled bar
function bar(cx, y, w, h, dark) {
    var x = cx - w / 2, e = Math.min(3, h / 2);
    var fill = dark ? '#0a0a0a' : '#b00000', side = dark ? '#4d4d4d' : '#ef4a50', top = dark ? '#333' : '#c9242a';
    return '<rect x="' + x + '" y="' + y + '" width="' + w + '" height="' + h + '" fill="' + fill + '"/>' +
        '<path d="M' + x + ' ' + y + 'v' + h + 'l3 -' + e + 'V' + (y + e) + 'zM' + (x + w) + ' ' + y + 'v' + h + 'l-3 -' + e + 'V' + (y + e) + 'z" fill="' + side + '"/>' +
        '<rect x="' + x + '" y="' + y + '" width="' + w + '" height="1" fill="' + top + '"/>';
}

function text(x, y, s, cls) {
    return '<text x="' + x + '" y="' + y + '" class="' + (cls || '') + '">' + s + '</text>';
}

function tag(x, y, s) {
    var w = s.length * 4 + 4;
    return '<rect x="' + (x - w / 2) + '" y="' + (y - 7) + '" width="' + w + '" height="13" fill="#f0f0f0"/>' + text(x, y + 2, s);
}

function comma(n) {
    return n.toLocaleString('en-US');
}

function drawCharts() {
    var s = '<path class="axis" d="M5 166.500h342"/>';
    [2703, 7432, 16378, 28341, 47279, 76860].forEach(function (v, i) {
        var x = 33.5 + i * 57.2, h = Math.round(v / 76860 * 125);
        s += bar(x, 166 - h, 33, h) + tag(x, 158 - h, comma(v)) + text(x, 180, years[i]);
    });
    document.getElementById('base').innerHTML = s;

    var added = [3350, 7190, 14803, 23099, 38002, 61256], gone = [647, 2461, 5856, 11137, 19063, 31675];
    s = '';
    added.forEach(function (v, i) {
        var x = 33 + i * 58.8, up = Math.round(v * 67 / 61256), down = Math.round(gone[i] * 34 / 31675);
        s += bar(x, 123 - up, 34, up) + bar(x, 124, 34, down, true);
        s += tag(x, 115 - up, comma(v)) + tag(x, 133 + down, '-' + comma(gone[i])) + text(x, 180, years[i]);
    });
    document.getElementById('moves').innerHTML = s + '<path class="axis" d="M4 123.500h351"/>';

    s = '<path class="axis" d="M4 156.500h330"/>';
    [63, 62, 61, 60, 60, 59].forEach(function (v, i) {
        var x = 31 + i * 55.2, cut = 77 + i;
        s += bar(x, 31, 32, cut - 31, true) + bar(x, cut, 32, 156 - cut);
        s += text(x, 57 + (i >> 1), [38, 38, 39, 40, 40, 41][i] + '%', 'pct') + text(x, 120 + (i >> 1), v + '%', 'pct');
        s += text(x, 168, years[i], 'small');
    });
    s += '<rect x="42" y="176" width="4" height="4" fill="#c8141c"/><rect x="159" y="176" width="4" height="4" fill="#111"/>';
    s += text(48, 180, 'Freemium Users Churned', 'small start') + text(165, 180, 'Freemium Users Upgraded to Subscription', 'small start');
    document.getElementById('lost').innerHTML = s;
}

drawGrid();
drawCharts();
```
